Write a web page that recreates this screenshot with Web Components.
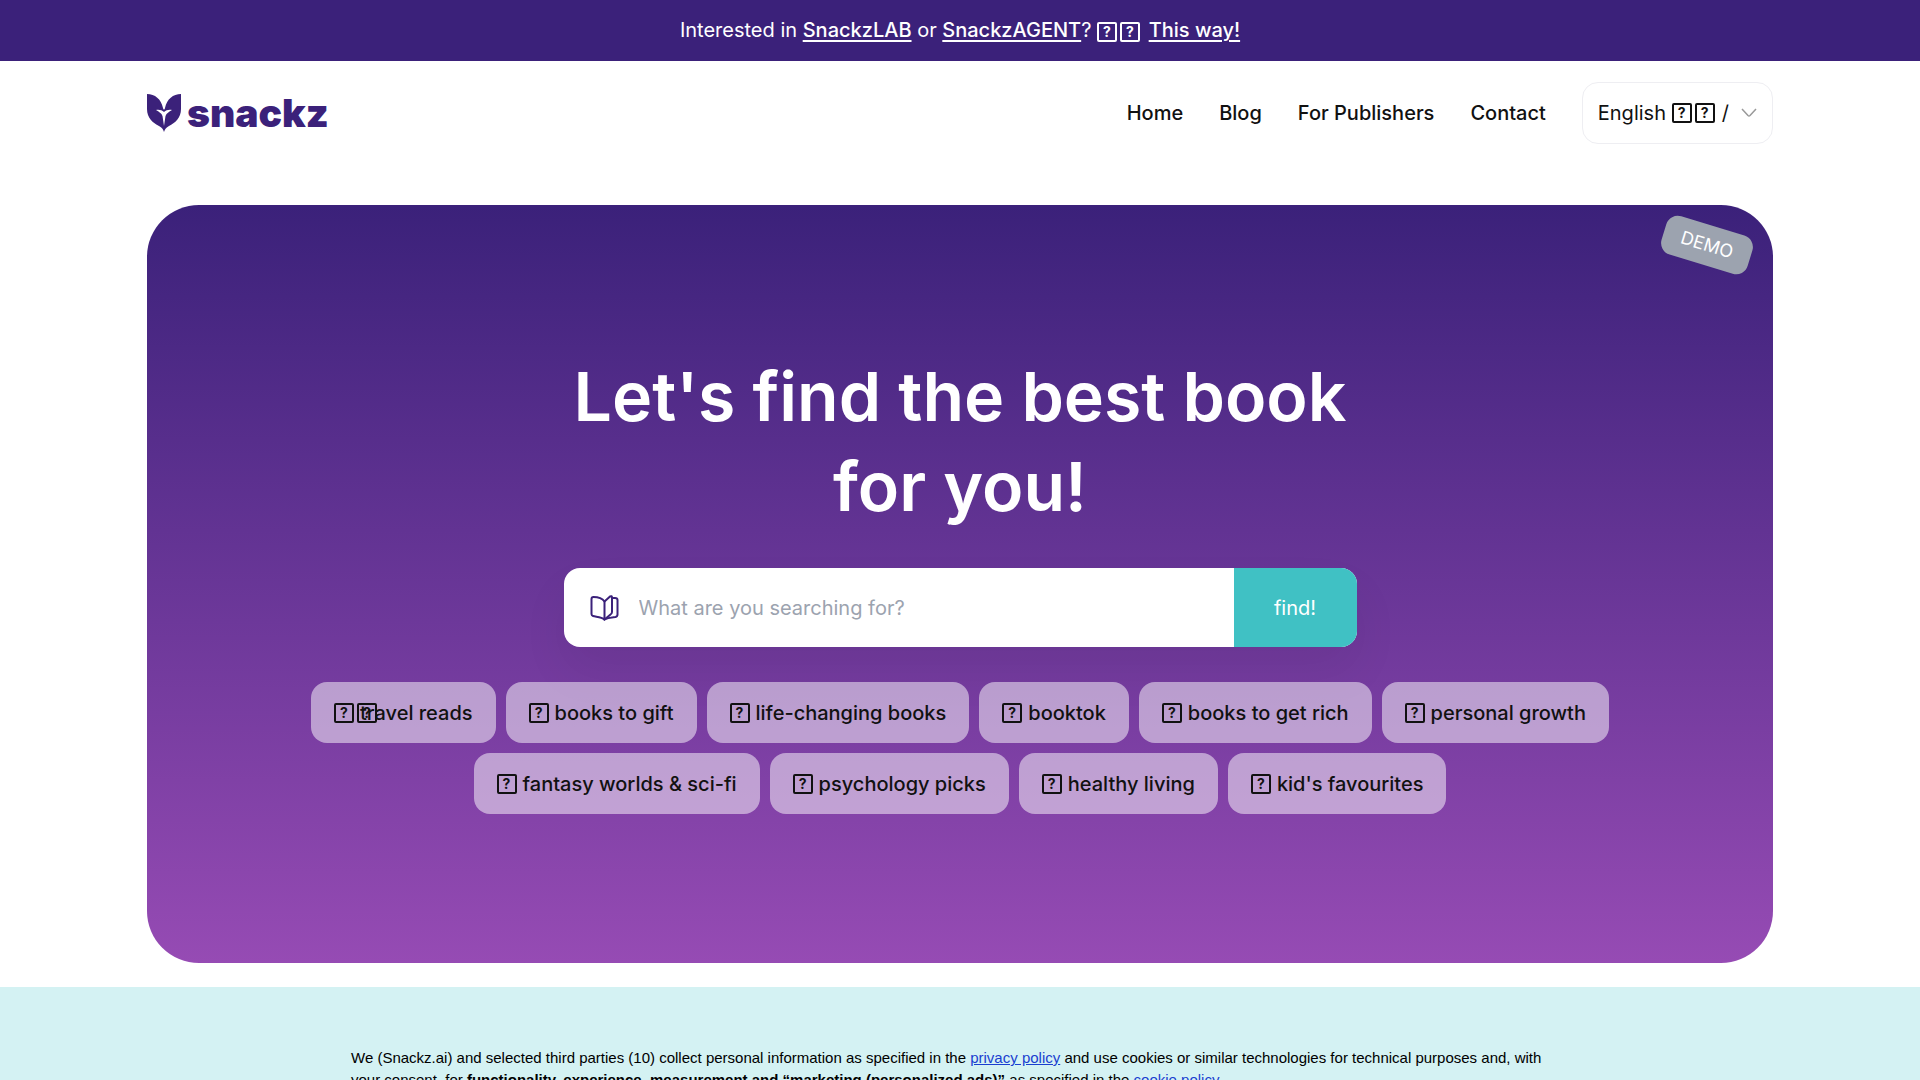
<!DOCTYPE html>
<html lang="en">
<head>
<meta charset="utf-8">
<meta name="viewport" content="width=device-width, initial-scale=1">
<title>snackz</title>
<style>
    html, body { height: 100%; margin: 0; }
    body {
        font-family: Inter, "Liberation Sans", sans-serif;
        font-size: 20px;
        line-height: 30px;
        color: #111;
        background: #fff;
        overflow: hidden;
        --brand: #3b217a;
        --page: min(1626px, 100% - 48px);
    }
</style>
</head>
<body>
<snackz-app></snackz-app>

<script>
class SnackzElement extends HTMLElement {
    constructor() {
        super();
        this.attachShadow({ mode: 'open' });
    }

    connectedCallback() {
        this.shadowRoot.innerHTML = this.render();
    }
}

// boxed question mark standing in for an emoji
class EmojiBox extends SnackzElement {
    render() {
        return `
            <style>
                :host {
                    display: inline-flex;
                    box-sizing: border-box;
                    width: 20px;
                    height: 20px;
                    margin-right: 3px;
                    border: 2px solid currentColor;
                    border-radius: 2px;
                    align-items: center;
                    justify-content: center;
                    vertical-align: middle;
                    font-size: 14px;
                    line-height: 16px;
                    font-weight: 700;
                }
            </style>
            <span>?</span>`;
    }
}

class PromoBar extends SnackzElement {
    render() {
        return `
            <style>
                :host { display: block; padding: 15px 24px 16px; background: var(--brand); color: #fff; text-align: center; }
                a { color: inherit; font-weight: 500; text-underline-offset: 3px; }
            </style>
            Interested in <a href="#lab">SnackzLAB</a> or <a href="#agent">SnackzAGENT</a>? <emoji-box></emoji-box><emoji-box></emoji-box> <a href="#this-way">This way!</a>`;
    }
}

class SiteLogo extends SnackzElement {
    render() {
        return `
            <style>
                :host { display: block; }
                a { display: flex; align-items: center; gap: 6px; color: var(--brand); text-decoration: none; }
                svg { display: block; }
                span { font-size: 39px; line-height: 38px; font-weight: 900; }
            </style>
            <a href="#home">
                <svg width="34" height="38" viewBox="0 0 34 38" fill="currentColor" aria-hidden="true">
                    <path d="M0 0C8 0 14 5 16 14C16.300 15.200 16.600 15.600 17 15.600C17.400 15.600 17.700 15.200 18 14C20 5 26 0 34 0V15C34 24 28 29 22 32C19 33.500 18 35 17 38C16 35 15 33.500 12 32C6 29 0 24 0 15Z"/>
                    <path fill="#fff" d="M16 0H18L17 14ZM9 16C12 15.500 15 16 17 18C19 16 22 15.500 25 16C22 18 19.500 19 18.500 22L17 32L15.500 22C14.500 19 12 18 9 16Z"/>
                </svg>
                <span>snackz</span>
            </a>`;
    }
}

class LanguagePicker extends SnackzElement {
    render() {
        return `
            <style>
                :host { display: block; }
                label {
                    display: flex;
                    align-items: center;
                    padding: 15px;
                    border: 1px solid #eeeef2;
                    border-radius: 16px;
                }
                select {
                    appearance: none;
                    margin: 0 5px 0 0;
                    padding: 0;
                    border: 0;
                    background: none;
                    color: inherit;
                    font: inherit;
                }
                span { margin-left: 4px; }
                svg { margin-left: 12px; }
            </style>
            <label>
                <select aria-label="Language"><option>English</option></select>
                <emoji-box></emoji-box><emoji-box></emoji-box><span>/</span>
                <svg width="16" height="10" viewBox="0 0 16 10" fill="none" stroke="#999" stroke-width="1.500" aria-hidden="true"><path d="M1 1L7 7.500Q8 8.500 9 7.500L15 1"/></svg>
            </label>`;
    }
}

class SiteHeader extends SnackzElement {
    render() {
        return `
            <style>
                :host {
                    display: flex;
                    align-items: center;
                    justify-content: space-between;
                    width: var(--page);
                    margin: 0 auto;
                    padding: 21px 0 61px;
                }
                nav { display: flex; align-items: center; gap: 36px; }
                nav a { color: inherit; font-weight: 500; text-decoration: none; }
            </style>
            <site-logo></site-logo>
            <nav>
                <a href="#home">Home</a>
                <a href="#blog">Blog</a>
                <a href="#publishers">For Publishers</a>
                <a href="#contact">Contact</a>
                <language-picker></language-picker>
            </nav>`;
    }
}

class SearchBox extends SnackzElement {
    render() {
        return `
            <style>
                :host { display: block; width: min(793px, 100%); }
                form {
                    display: flex;
                    height: 79px;
                    border-radius: 16px;
                    overflow: hidden;
                    background: #fff;
                    box-shadow: 0 24px 48px rgba(0, 0, 0, .06);
                }
                label { display: flex; align-items: center; padding: 0 20px 0 26px; }
                input {
                    flex: 1;
                    min-width: 0;
                    padding: 0;
                    border: 0;
                    outline: 0;
                    background: none;
                    font: inherit;
                }
                input::placeholder { color: #9ca3af; opacity: 1; }
                button {
                    width: 123px;
                    padding: 0;
                    border: 0;
                    background: #40c1c4;
                    color: #fff;
                    font: inherit;
                }
            </style>
            <form>
                <label for="query">
                    <svg width="29" height="26" viewBox="0 0 29 26" fill="none" stroke="#3b217a" stroke-width="2" stroke-linejoin="round" stroke-linecap="round" role="img" aria-label="Search books">
                        <path d="M14.500 24.500C11 21.500 6 22 3 21Q1.500 20.500 1.500 19V4Q1.500 2 3.500 2C8 2 12 3 14.500 6.500Z"/>
                        <path d="M14.500 6.500L20 1.500Q22 .500 22 2.500V17Q22 18.500 20.500 19.500L14.500 24.500"/>
                        <path d="M22 3H25Q27.500 3 27.500 5V19.500Q27.500 21.500 25.500 22C21 22.500 18 22.500 14.500 24.500"/>
                    </svg>
                </label>
                <input id="query" type="text" placeholder="What are you searching for?">
                <button type="button">find!</button>
            </form>`;
    }
}

class TopicChip extends SnackzElement {
    render() {
        // a wide emoji has a second box that runs under the label
        const wide = this.hasAttribute('wide');
        return `
            <style>
                :host { display: block; }
                button {
                    position: relative;
                    display: flex;
                    align-items: center;
                    height: 61px;
                    padding: 0 23px;
                    border: 0;
                    border-radius: 16px;
                    background: rgba(255, 255, 255, .5);
                    color: #111;
                    font: inherit;
                    font-weight: 500;
                    white-space: nowrap;
                }
                button > emoji-box { margin-right: 6px; }
                .extra { position: absolute; left: 46px; }
            </style>
            <button type="button"><emoji-box></emoji-box>${wide ? '<emoji-box class="extra"></emoji-box>' : ''}<slot></slot></button>`;
    }
}

class DemoBadge extends SnackzElement {
    render() {
        return `
            <style>
                :host {
                    position: absolute;
                    top: 20px;
                    right: 21px;
                    padding: 5px 18px;
                    border-radius: 12px;
                    background: #9ca3af;
                    color: #fff;
                    font-size: 18px;
                    transform: rotate(17deg);
                }
            </style>
            <slot></slot>`;
    }
}

class HeroPanel extends SnackzElement {
    render() {
        return `
            <style>
                :host {
                    position: relative;
                    display: flex;
                    flex-direction: column;
                    align-items: center;
                    gap: 35px;
                    box-sizing: border-box;
                    width: var(--page);
                    margin: 0 auto 24px;
                    padding: 146px 24px 149px;
                    border-radius: 52px;
                    background: linear-gradient(#3b217a, #964bb4);
                }
                h1 {
                    max-width: 800px;
                    margin: 0 0 2px;
                    color: #fff;
                    font-size: 68px;
                    line-height: 90px;
                    font-weight: 600;
                    text-align: center;
                }
                .topics {
                    display: flex;
                    flex-wrap: wrap;
                    justify-content: center;
                    gap: 10px;
                    max-width: 1360px;
                }
            </style>
            <demo-badge>DEMO</demo-badge>
            <h1>Let's find the best book for you!</h1>
            <search-box></search-box>
            <div class="topics">
                <topic-chip wide>travel reads</topic-chip>
                <topic-chip>books to gift</topic-chip>
                <topic-chip>life-changing books</topic-chip>
                <topic-chip>booktok</topic-chip>
                <topic-chip>books to get rich</topic-chip>
                <topic-chip>personal growth</topic-chip>
                <topic-chip>fantasy worlds &amp; sci-fi</topic-chip>
                <topic-chip>psychology picks</topic-chip>
                <topic-chip>healthy living</topic-chip>
                <topic-chip>kid's favourites</topic-chip>
            </div>`;
    }
}

class CookieNotice extends SnackzElement {
    render() {
        return `
            <style>
                :host { display: block; flex: 1; padding: 60px 24px 0; background: #d4f2f3; }
                p {
                    max-width: 1218px;
                    margin: 0 auto;
                    color: #000;
                    font-family: "Liberation Sans", Arial, sans-serif;
                    font-size: 15px;
                    line-height: 22px;
                }
                a { color: #1a3fd0; }
            </style>
            <p>We (Snackz.ai) and selected third parties (10) collect personal information as specified in the <a href="#privacy">privacy policy</a> and use cookies or similar technologies for technical purposes and, with your consent, for <b>functionality, experience, measurement and “marketing (personalized ads)”</b> as specified in the <a href="#cookies">cookie policy</a>.</p>`;
    }
}

class SnackzApp extends SnackzElement {
    render() {
        return `
            <style>
                :host { display: flex; flex-direction: column; height: 100%; overflow: hidden; }
                promo-bar, site-header, hero-panel { flex-shrink: 0; }
            </style>
            <promo-bar></promo-bar>
            <site-header></site-header>
            <hero-panel></hero-panel>
            <cookie-notice></cookie-notice>`;
    }
}

customElements.define('emoji-box', EmojiBox);
customElements.define('promo-bar', PromoBar);
customElements.define('site-logo', SiteLogo);
customElements.define('language-picker', LanguagePicker);
customElements.define('site-header', SiteHeader);
customElements.define('search-box', SearchBox);
customElements.define('topic-chip', TopicChip);
customElements.define('demo-badge', DemoBadge);
customElements.define('hero-panel', HeroPanel);
customElements.define('cookie-notice', CookieNotice);
customElements.define('snackz-app', SnackzApp);
</script>
</body>
</html>
